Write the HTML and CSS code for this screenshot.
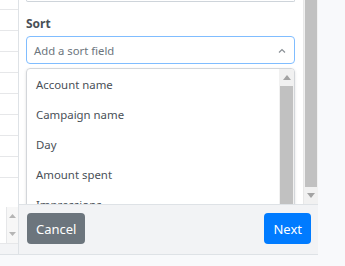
FILE: index.html
```html
<html>
<head>
    <link rel="stylesheet" href="styles.css">
</head>
<body>
    <div class="screen">
        <div class="behind">
            <div class="behind-rows"></div>
            <div class="behind-scroll">
                <svg width="7" height="4" viewBox="0 0 7 4"><polygon points="0,4 3.5,0 7,4" fill="#b5b5b5"/></svg>
                <svg width="7" height="4" viewBox="0 0 7 4"><polygon points="0,0 3.5,4 7,0" fill="#b5b5b5"/></svg>
            </div>
            <div class="behind-foot"></div>
        </div>

        <div class="modal">
            <div class="modal-body">
                <div class="form">
                    <div class="prev-field"></div>
                    <p class="field-label">Sort</p>
                    <div class="select">
                        <span class="placeholder">Add a sort field</span>
                        <svg width="8" height="5" viewBox="0 0 8 5"><polyline points="1,4.5 4,1.5 7,4.5" fill="none" stroke="#8a9096" stroke-width="1.2"/></svg>
                    </div>
                    <div class="menu">
                        <ul class="menu-list">
                            <li>Account name</li>
                            <li>Campaign name</li>
                            <li>Day</li>
                            <li>Amount spent</li>
                            <li>Impressions</li>
                            <li>Clicks</li>
                        </ul>
                        <div class="scrollbar menu-scroll">
                            <div class="scroll-arrow">
                                <svg width="8" height="5" viewBox="0 0 8 5"><polygon points="0,5 4,0 8,5" fill="#a3a3a3"/></svg>
                            </div>
                            <div class="scroll-thumb"></div>
                        </div>
                    </div>
                </div>
                <div class="scrollbar body-scroll">
                    <div class="scroll-thumb"></div>
                    <div class="scroll-arrow">
                        <svg width="8" height="5" viewBox="0 0 8 5"><polygon points="0,0 4,5 8,0" fill="#a3a3a3"/></svg>
                    </div>
                </div>
            </div>
            <div class="modal-footer">
                <button class="btn grey-btn">Cancel</button>
                <button class="btn blue-btn">Next</button>
            </div>
        </div>
    </div>
</body>
</html>
```

FILE: styles.css
```css
:root {
    --page-bg: #f8f9fb;
    --line: #dee2e6;
    --text: #495057;
    --muted: #6c757d;
    --def-fn: "Noto Sans", "Open Sans", sans-serif;
}

* {
    box-sizing: border-box;
    font-family: var(--def-fn);

    margin: 0px;
    padding: 0px;
}

body {
    background-color: var(--page-bg);
    overflow: hidden;
}

.screen {
    display: flex;
    width: 318px;
    height: 255px;
    border-bottom: 1px solid var(--line);
}

/* table peeking out on the left */
.behind {
    display: flex;
    flex-direction: column;
    width: 18px;
    background-color: #fff;
}

.behind-rows {
    flex: 1;
    background: repeating-linear-gradient(to bottom, transparent 0px, transparent 20px, #e6e7e9 20px, #e6e7e9 21px);
    background-position: 0px -11px;
}

.behind-scroll {
    display: flex;
    flex-direction: column;
    align-items: center;
    justify-content: space-around;
    height: 36px;
    margin-left: 6px;
    border-left: 1px solid #e6e7e9;
    background-color: #f7f7f7;
}

.behind-foot {
    height: 11px;
    background-color: #f3f4f6;
    border-top: 1px solid #e6e7e9;
}

/* modal */
.modal {
    display: flex;
    flex-direction: column;
    width: 300px;
    border-left: 1px solid var(--line);
    background-color: #fff;
}

.modal-body {
    display: flex;
    height: 205px;
    overflow: hidden;
}

.form {
    flex: 1;
    padding: 0px 8px 0px 7px;
}

.prev-field {
    height: 2px;
    border: 1px solid #ced4da;
    border-top: none;
    border-radius: 0px 0px 4px 4px;
}

.field-label {
    margin-top: 12px;
    margin-bottom: 2px;
    font-size: 12px;
    line-height: 20px;
    font-weight: bold;
    color: #495057;
}

.select {
    display: flex;
    align-items: center;
    justify-content: space-between;
    height: 28px;
    padding: 0px 8px 0px 7px;
    border: 1px solid #80bdff;
    border-radius: 4px;
}

.placeholder {
    font-size: 11.3px;
    color: var(--muted);
}

.menu {
    display: flex;
    height: 180px;
    margin-top: 4px;
    border: 1px solid #d3d6da;
    border-radius: 4px;
    box-shadow: 0px 1px 3px rgba(0, 0, 0, 0.12);
    overflow: hidden;
}

.menu-list {
    flex: 1;
    list-style: none;
    padding-top: 1px;
}

.menu-list li {
    height: 30px;
    padding-left: 9px;
    font-size: 11.4px;
    line-height: 30px;
    color: var(--text);
}

/* fake scrollbars */
.scrollbar {
    display: flex;
    flex-direction: column;
    width: 15px;
    background-color: #f1f1f1;
}

.scroll-arrow {
    display: flex;
    align-items: center;
    justify-content: center;
    height: 17px;
}

.scroll-thumb {
    margin: 0px 1px;
    background-color: #c1c1c1;
}

.menu-scroll .scroll-thumb {
    flex: 1;
}

.body-scroll {
    border-left: 1px solid #e8e8e8;
}

.body-scroll .scroll-thumb {
    height: 188px;
}

.modal-footer {
    display: flex;
    justify-content: space-between;
    height: 50px;
    padding: 8px 7px 0px 8px;
    border-top: 1px solid var(--line);
    background-color: #f2f3f5;
}

.btn {
    height: 31px;
    padding: 0px 8px;
    border: 1px solid transparent;
    border-radius: 4px;
    font-size: 13px;
    color: #fff;
}

.grey-btn {
    background-color: #6c757d;
}

.blue-btn {
    background-color: #007bff;
}
```
